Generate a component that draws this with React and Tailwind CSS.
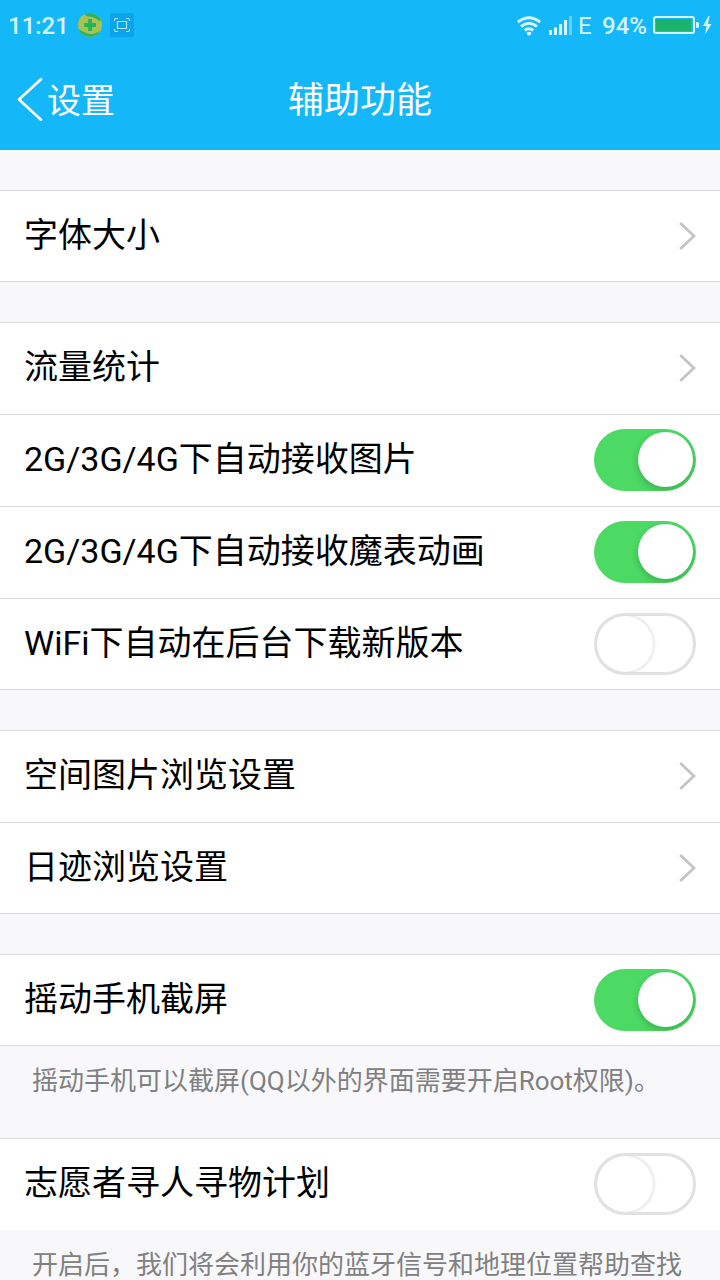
import React from 'react';

const FONT = "font-[Roboto,'Noto_Sans_CJK_SC',sans-serif]";

function Chevron() {
  return (
    <svg width="17" height="30" viewBox="0 0 17 30" fill="none" className="mt-[30px] shrink-0">
      <path d="M1.200 2 L15 15 L1.200 28" stroke="#c4c4c4" strokeWidth="2.8" />
    </svg>
  );
}

function Toggle({ on }) {
  return on ? (
    <span role="switch" aria-checked="true" className="mt-[14px] flex h-[62px] w-[102px] shrink-0 items-start justify-end overflow-hidden rounded-full bg-[#4cd964] pt-[3px] pr-[3.500px]">
      <span className="h-[55px] w-[55px] rounded-full bg-white shadow-[0_3px_7px_rgba(0,0,0,0.2)]" />
    </span>
  ) : (
    <span role="switch" aria-checked="false" className="mt-[14px] flex h-[62px] w-[102px] shrink-0 items-center overflow-hidden rounded-full border-[3px] border-[#e1e1e1] bg-white">
      <span className="h-[56px] w-[56px] rounded-full bg-white shadow-[0_0_4px_rgba(0,0,0,0.22)]" />
    </span>
  );
}

function Row({ label, control }) {
  return (
    <div className="flex h-[92px] items-start justify-between border-t border-[#d9d9dc] bg-white pr-6 pl-6 last:border-b">
      <span className="mt-[19px] text-[34px] leading-[50px] whitespace-nowrap text-black">{label}</span>
      {control === 'link' ? <Chevron /> : <Toggle on={control === 'on'} />}
    </div>
  );
}

function Group({ children }) {
  return <section className="flex flex-col">{children}</section>;
}

function StatusBar() {
  return (
    <div className="flex h-[50px] items-center text-[#d5f4ff]">
      <span className="ml-[8px] w-[62px] pt-[2px] text-[24px] leading-[48px] font-medium">11:21</span>
      <svg width="26" height="26" viewBox="0 0 26 26" className="ml-[7px]">
        <circle cx="13" cy="13" r="12" fill="#a9c254" />
        <path d="M8 2 A12 12 0 0 1 23.500 7.500 Q24 9 22.500 9 Q17 4.500 12 4.500 Q8 4 8 2Z" fill="#28b363" />
        <path d="M1.500 17 Q5 19 8 20.500 Q14 23.500 20 20.500 L23 19 A12 12 0 0 1 1.500 17Z" fill="#28b363" />
        <path d="M11.200 7h3.800v4h4v4h-4v4h-3.800v-4h-4v-4h4z" fill="#23b45a" />
      </svg>
      <svg width="24" height="24" viewBox="0 0 24 24" className="ml-[7px]" fill="none">
        <rect width="24" height="24" rx="1.500" fill="#0ba4ec" />
        <path d="M4.500 8V7q0-1.500 1.500-1.500h2M16 5.500h2q1.500 0 1.500 1.500v1M19.500 16v1q0 1.500-1.500 1.500h-2M8 18.500H6q-1.500 0-1.500-1.500v-1M7.500 8.500h9v7h-9z" stroke="#b9eafc" strokeWidth="1.2" />
      </svg>
      <div className="ml-auto flex h-[50px] items-center pt-[1px]">
        <svg width="26" height="20" viewBox="0 0 26 20" fill="none" stroke="#d5f4ff" strokeWidth="2.9">
          <path d="M1.800 6.200Q13-2.900 24.200 6.200M5 10.500Q13 4 21 10.500M8.700 14.400Q13 11 17.300 14.400" />
          <path d="M10.500 16.700Q13 14.900 15.500 16.700Q15 19.500 13 19.500T10.500 16.700Z" fill="#d5f4ff" stroke="none" />
        </svg>
        <svg width="24" height="20" viewBox="0 0 24 20" className="ml-[7px]" fill="#d5f4ff">
          <path d="M0 14h3v5H0zM5 11.500h3V19H5zM10 8h3v11h-3zM15 4h3v15h-3z" />
          <path d="M20 0h3v19h-3z" opacity=".4" />
        </svg>
        <span className="ml-[5px] w-[24px] pt-px text-[24px] leading-[48px]">E</span>
        <span className="w-[46px] pt-px text-[24px] leading-[48px] font-medium">94%</span>
        <svg width="60" height="20" viewBox="0 0 60 20" className="mr-[7px] ml-[5px]">
          <rect x="1" y="1" width="40" height="16" rx="2" fill="none" stroke="#d5f4ff" strokeWidth="2" />
          <rect x="3" y="3" width="35" height="12" fill="#19b36c" />
          <path d="M43 6h1.500q1.500 0 1.500 1.500v3q0 1.500-1.500 1.500H43zM55.500 0L50 10h3.500L52 18.500 58.500 8h-3.500L56.500 0z" fill="#d5f4ff" />
        </svg>
      </div>
    </div>
  );
}

export default function App() {
  return (
    <main className={`${FONT} h-[1280px] w-[720px] overflow-hidden bg-[#f8f8fb]`}>
      <header className="h-[150px] bg-[#14b7f8]">
        <StatusBar />
        <nav className="grid h-[100px] grid-cols-3 items-center text-white">
          <div className="flex items-center pl-[17px]">
            <svg width="26" height="46" viewBox="0 0 26 46" fill="none">
              <path d="M24 2.300L2 22.500L24 42.700" stroke="white" strokeWidth="2.700" strokeLinecap="round" strokeLinejoin="round" />
            </svg>
            <span className="ml-[4px] pt-[2px] text-[34px] leading-[50px]">设置</span>
          </div>
          <h1 className="pt-[2px] text-center text-[36px] leading-[50px] font-normal">辅助功能</h1>
        </nav>
      </header>

      <div className="flex flex-col gap-10 pt-10">
        <Group>
          <Row label="字体大小" control="link" />
        </Group>
        <Group>
          <Row label="流量统计" control="link" />
          <Row label="2G/3G/4G下自动接收图片" control="on" />
          <Row label="2G/3G/4G下自动接收魔表动画" control="on" />
          <Row label="WiFi下自动在后台下载新版本" control="off" />
        </Group>
        <Group>
          <Row label="空间图片浏览设置" control="link" />
          <Row label="日迹浏览设置" control="link" />
        </Group>
        <Group>
          <Row label="摇动手机截屏" control="on" />
        </Group>
      </div>

      <p className="h-[92px] pt-[16px] pl-8 text-[26px] leading-[38px] whitespace-nowrap text-[#808080]">
        摇动手机可以截屏(QQ以外的界面需要开启Root权限)。
      </p>
      <Group>
        <Row label="志愿者寻人寻物计划" control="off" />
        <p className="h-[50px] pt-[16px] pl-8 text-[26px] leading-[38px] whitespace-nowrap text-[#808080]">
          开启后，我们将会利用你的蓝牙信号和地理位置帮助查找
        </p>
      </Group>
    </main>
  );
}
